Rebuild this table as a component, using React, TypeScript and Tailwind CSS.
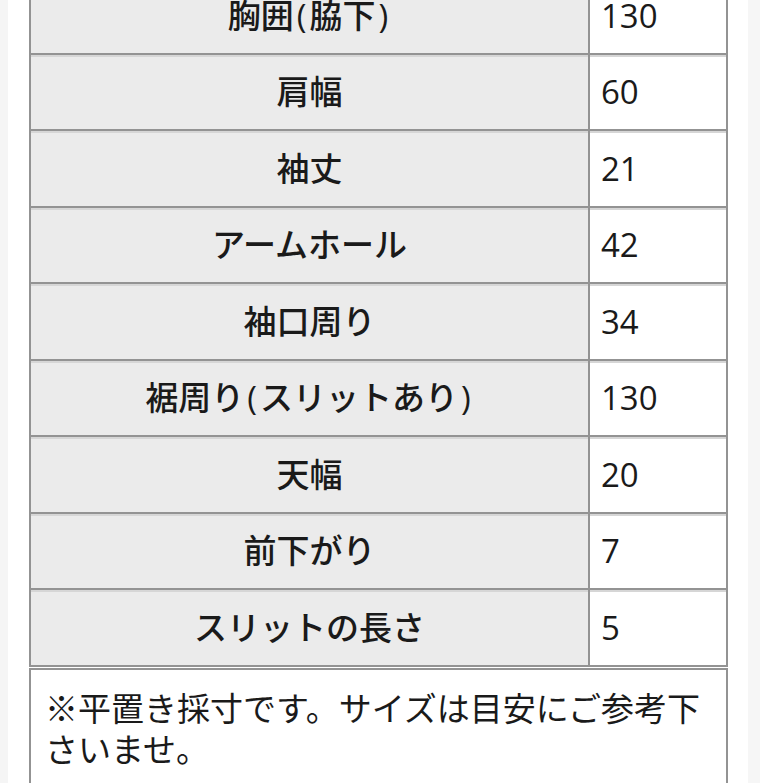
import React from "react";

const rows: [string, string][] = [
  ["胸囲(脇下)", "130"],
  ["肩幅", "60"],
  ["袖丈", "21"],
  ["アームホール", "42"],
  ["袖口周り", "34"],
  ["裾周り(スリットあり)", "130"],
  ["天幅", "20"],
  ["前下がり", "7"],
  ["スリットの長さ", "5"],
];

function Label({ text }: { text: string }) {
  const parts = text.split(/([()])/);
  return (
    <>
      {parts.map((p, i) =>
        p === "(" || p === ")" ? (
          <span key={i} className="px-[3px]">
            {p}
          </span>
        ) : (
          <span key={i}>{p}</span>
        )
      )}
    </>
  );
}

export default function App() {
  return (
    <div
      className="h-[783px] w-[783px] overflow-hidden bg-[linear-gradient(to_right,#f5f5f5_8px,#ffffff_8px,#ffffff_748px,#f6f6f6_748px,#f6f6f6_760px,#ffffff_760px)] text-[#1a1a1a]"
      style={{ fontFamily: '"Open Sans", "Noto Sans CJK JP", sans-serif' }}
    >
      <div className="ml-[29px] mt-[-22px] w-[699px]">
        <div className="border-x-2 border-[#939393]">
          {rows.map(([label, value]) => (
            <div
              key={label}
              className="flex h-[76.5px] border-b-2 border-[#939393]"
            >
              <div className="flex w-[559px] items-center justify-center border-r-2 border-[#939393] bg-[#ebebeb] text-[33px] font-medium leading-none shadow-[inset_0_2px_0_#d6d6d6]">
                <Label text={label} />
              </div>
              <div className="flex flex-1 items-center bg-white pl-[11px] text-[33px] leading-none shadow-[inset_0_2px_0_#d6d6d6]">
                {value}
              </div>
            </div>
          ))}
        </div>
        <div className="mt-[1px] h-[200px] border-2 border-[#939393] bg-white px-[14px] pt-[18px] text-[33px] leading-[41px]">
          ※平置き採寸です。サイズは目安にご参考下さいませ。
        </div>
      </div>
    </div>
  );
}
